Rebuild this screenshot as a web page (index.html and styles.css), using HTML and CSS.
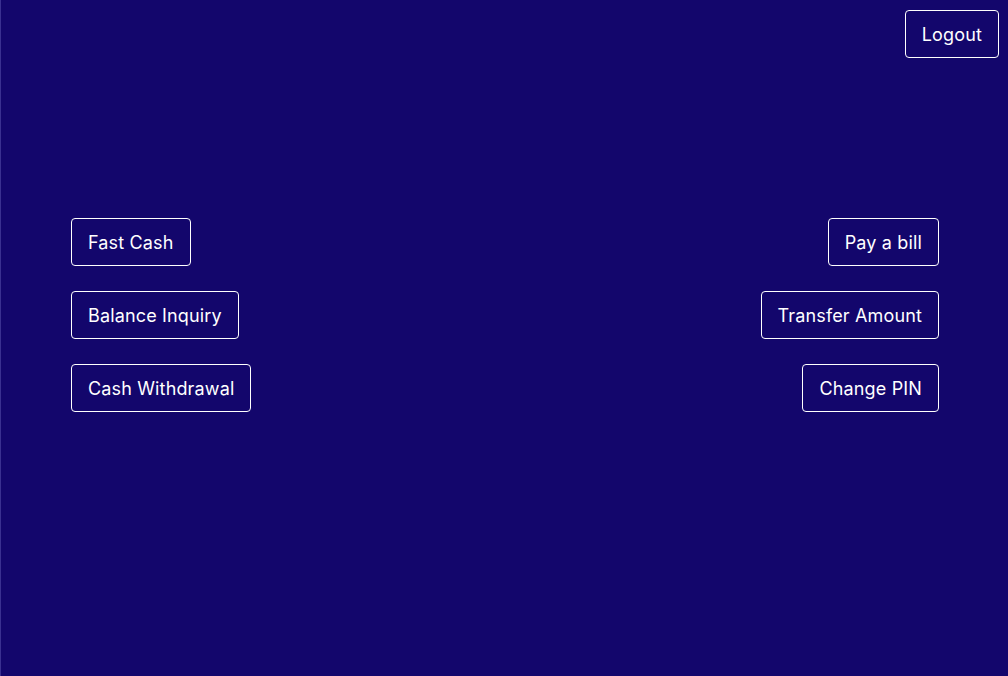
FILE: index.html
```html
<!DOCTYPE html>
<html>
<head>
<meta charset="utf-8">
<link rel="stylesheet" href="styles.css">
</head>
<body>
<div class="page">
  <header class="top">
    <button class="btn">Logout</button>
  </header>
  <main class="menu">
    <div class="col col-left">
      <button class="btn">Fast Cash</button>
      <button class="btn">Balance Inquiry</button>
      <button class="btn">Cash Withdrawal</button>
    </div>
    <div class="col col-right">
      <button class="btn">Pay a bill</button>
      <button class="btn">Transfer Amount</button>
      <button class="btn">Change PIN</button>
    </div>
  </main>
</div>
</body>
</html>
```
FILE: styles.css
```css
html, body {
  margin: 0;
  padding: 0;
  height: 100%;
}
body {
  background: #13066c;
  font-family: Inter, "Noto Sans", sans-serif;
}
.page {
  height: 100%;
  border-left: 1px solid #3a3090;
  box-sizing: border-box;
}
.top {
  display: flex;
  justify-content: flex-end;
  padding: 10px 9px 0 0;
}
.btn {
  height: 48px;
  padding: 2px 16px 0;
  background: transparent;
  color: #ffffff;
  border: 1px solid #ffffff;
  border-radius: 4px;
  font-family: Inter, "Noto Sans", sans-serif;
  font-size: 18px;
  letter-spacing: 0.15px;
  line-height: 1;
  cursor: pointer;
}
.menu {
  display: flex;
  justify-content: space-between;
  padding: 160px 69px 0 70px;
}
.col {
  display: flex;
  flex-direction: column;
  gap: 25px;
}
.col-left { align-items: flex-start; }
.col-right { align-items: flex-end; }
```
